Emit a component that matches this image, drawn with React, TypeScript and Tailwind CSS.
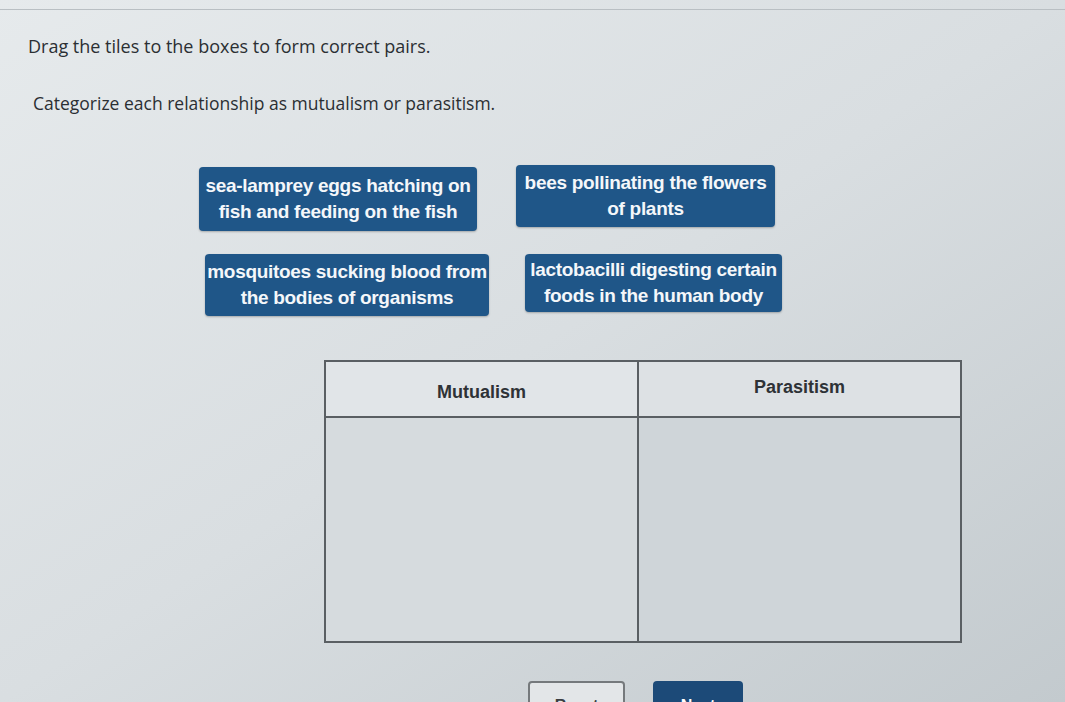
const TILE_ROWS = [
  [
    { text: ["sea-lamprey eggs hatching on", "fish and feeding on the fish"], w: "w-[278px]", h: "h-[64px]" },
    { text: ["bees pollinating the flowers", "of plants"], w: "w-[259px]", h: "h-[62px]" },
  ],
  [
    { text: ["mosquitoes sucking blood from", "the bodies of organisms"], w: "w-[284px]", h: "h-[62px]" },
    { text: ["lactobacilli digesting certain", "foods in the human body"], w: "w-[257px]", h: "h-[58px]" },
  ],
];

function Tile({ text, w, h }: { text: string[]; w: string; h: string }) {
  return (
    <div
      className={`${w} ${h} rounded-[4px] bg-[#1f5688] text-[#f4f7fa] flex flex-col items-center justify-center whitespace-nowrap text-[19px] leading-[26px] font-bold font-['Liberation_Sans',Arial,sans-serif] tracking-[-0.3px] shadow-[0_1px_2px_rgba(0,0,0,0.25)]`}
    >
      {text.map((line) => (
        <span key={line}>{line}</span>
      ))}
    </div>
  );
}

export default function App() {
  return (
    <div className="w-[1065px] h-[702px] overflow-hidden bg-gradient-to-br from-[#e6eaec] via-[#d9dee1] to-[#c3cace] font-['Open_Sans',sans-serif] text-[#2b2f33]">
      {/* top divider */}
      <div className="h-[10px] border-b border-[#b9bfc3]" />

      <p className="mt-[24px] ml-[28px] text-[18px] leading-[24px]">Drag the tiles to the boxes to form correct pairs.</p>
      <p className="mt-[33px] ml-[33px] text-[17.5px] leading-[24px]">Categorize each relationship as mutualism or parasitism.</p>

      {/* answer tiles */}
      <div className="mt-[52px] flex flex-col gap-[23px]">
        <div className="flex items-start gap-[39px] ml-[199px]">
          <Tile {...TILE_ROWS[0][0]} />
          <div className="-mt-[2px]">
            <Tile {...TILE_ROWS[0][1]} />
          </div>
        </div>
        <div className="flex items-start gap-[36px] ml-[205px]">
          <Tile {...TILE_ROWS[1][0]} />
          <Tile {...TILE_ROWS[1][1]} />
        </div>
      </div>

      {/* drop table */}
      <div className="mt-[44px] ml-[324px] w-[638px] h-[283px] border-2 border-[#5a5f63] grid grid-cols-[313px_1fr] grid-rows-[56px_1fr] font-['Liberation_Sans',Arial,sans-serif]">
        <div className="border-r-2 border-b-2 border-[#5a5f63] bg-[#e1e5e8] flex items-center justify-center pt-[6px] text-[18px] font-bold text-[#2e3236]">
          Mutualism
        </div>
        <div className="border-b-2 border-[#5a5f63] bg-[#dde1e4] flex items-center justify-center pb-[4px] text-[18px] font-bold text-[#2e3236]">
          Parasitism
        </div>
        <div className="border-r-2 border-[#5a5f63] bg-[#d6dbde]" />
        <div className="bg-[#cfd5d9]" />
      </div>

      {/* actions */}
      <div className="mt-[38px] ml-[528px] flex gap-[28px] font-['Liberation_Sans',Arial,sans-serif]">
        <button className="w-[97px] h-[40px] rounded-[4px] border-2 border-[#75797c] bg-[#e3e6e8] text-[#3a3e42] text-[16px] font-bold pt-[10px]">
          Reset
        </button>
        <button className="w-[90px] h-[40px] rounded-[4px] bg-[#1c4a78] text-white text-[16px] font-bold pt-[10px]">
          Next
        </button>
      </div>
    </div>
  );
}
